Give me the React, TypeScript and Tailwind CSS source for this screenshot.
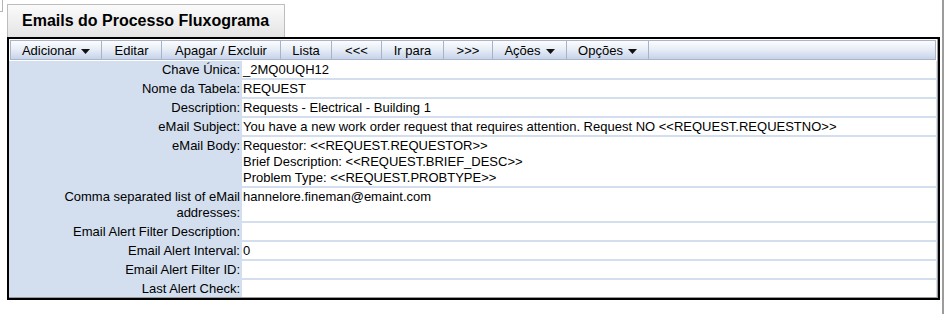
import React from "react";

type Field = {
  label: string[];
  value: string[];
};

const fields: Field[] = [
  { label: ["Chave Única:"], value: ["_2MQ0UQH12"] },
  { label: ["Nome da Tabela:"], value: ["REQUEST"] },
  { label: ["Description:"], value: ["Requests - Electrical - Building 1"] },
  {
    label: ["eMail Subject:"],
    value: [
      "You have a new work order request that requires attention. Request NO <<REQUEST.REQUESTNO>>",
    ],
  },
  {
    label: ["eMail Body:"],
    value: [
      "Requestor: <<REQUEST.REQUESTOR>>",
      "Brief Description: <<REQUEST.BRIEF_DESC>>",
      "Problem Type: <<REQUEST.PROBTYPE>>",
    ],
  },
  {
    label: ["Comma separated list of eMail", "addresses:"],
    value: ["hannelore.fineman@emaint.com"],
  },
  { label: ["Email Alert Filter Description:"], value: [] },
  { label: ["Email Alert Interval:"], value: ["0"] },
  { label: ["Email Alert Filter ID:"], value: [] },
  { label: ["Last Alert Check:"], value: [] },
];

const menu = [
  { text: "Adicionar", w: "w-[91px]", caret: true },
  { text: "Editar", w: "w-[60px]" },
  { text: "Apagar / Excluir", w: "w-[119px]" },
  { text: "Lista", w: "w-[51px]" },
  { text: "<<<", w: "w-[50px]" },
  { text: "Ir para", w: "w-[62px]" },
  { text: ">>>", w: "w-[49px]" },
  { text: "Ações", w: "w-[74px]", caret: true },
  { text: "Opções", w: "w-[82px]", caret: true },
];

function Caret() {
  return (
    <svg width="9" height="5" viewBox="0 0 9 5" className="ml-[5px] mt-[2px]">
      <polygon points="0,0 9,0 4.5,5" fill="#111" />
    </svg>
  );
}

export default function App() {
  return (
    <div className="w-[945px] h-[314px] bg-white flex font-['Liberation_Sans',Arial,sans-serif] text-black overflow-hidden">
      <div className="w-[7px] shrink-0">
        <div className="w-[3px] h-[12px] border-r border-b border-[#b5b5b5]" />
      </div>

      <div className="w-[933px] shrink-0 pt-[4px]">
        <div className="w-[278px] h-[33px] border border-b-0 border-[#bdbdbd] bg-gradient-to-b from-[#fbfbfb] to-[#e4e4e4] flex items-center pl-[14px] text-[16px] font-bold leading-none">
          Emails do Processo Fluxograma
        </div>

        <div className="border-2 border-black">
          <div className="border-r border-b border-[#9a9a9a] bg-white">
            <div className="p-px">
              <div className="h-[20px] border border-[#aab5c9] bg-gradient-to-b from-[#fbfcfe] via-[#e6ecf6] to-[#c6d3ea] flex text-[13px] leading-none">
                {menu.map((m, i) => (
                  <div
                    key={i}
                    className={`${m.w} h-full flex items-center justify-center border-r border-[#a7b3c7]`}
                  >
                    <span>{m.text}</span>
                    {m.caret && <Caret />}
                  </div>
                ))}
              </div>
            </div>

            <div className="bg-[#d3dfef] flex flex-col gap-[2px] pr-px text-[13px] leading-[16px]">
              {fields.map((f, i) => (
                <div key={i} className="flex">
                  <div className="w-[233px] shrink-0 text-right pr-[2px] pt-px">
                    {f.label.map((l, j) => (
                      <div key={j}>{l}</div>
                    ))}
                  </div>
                  <div className="flex-1 bg-white pl-px pt-px min-h-[17px]">
                    {f.value.map((v, j) => (
                      <div key={j}>{v}</div>
                    ))}
                  </div>
                </div>
              ))}
            </div>
          </div>
        </div>
      </div>

      <div className="flex-1" />
      <div className="w-[2px] h-full bg-[#9c9c9c] mr-px" />
    </div>
  );
}
